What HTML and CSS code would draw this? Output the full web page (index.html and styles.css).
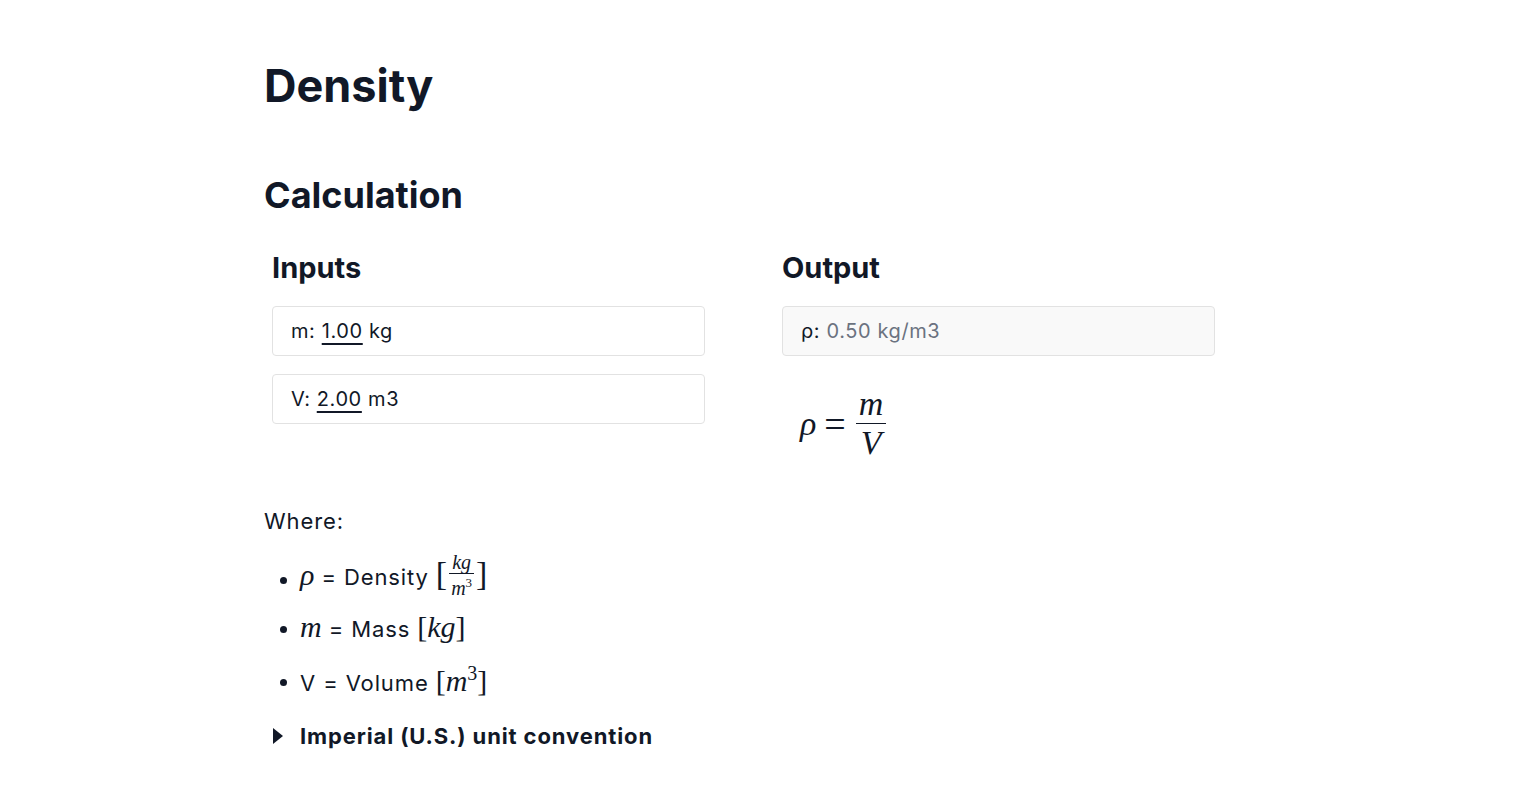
FILE: index.html
```html
<!DOCTYPE html>
<html lang="en">
<head>
    <meta charset="UTF-8">
    <meta name="viewport" content="width=device-width, initial-scale=1.0">
    <title>Density</title>
    <link rel="stylesheet" href="styles.css">
</head>
<body>
    <div class="page">
        <h1>Density</h1>

        <h2>Calculation</h2>

        <div class="calc">
            <div class="calc-col">
                <h3>Inputs</h3>
                <div class="field">m: <span class="num">1.00</span> kg</div>
                <div class="field">V: <span class="num">2.00</span> m3</div>
            </div>
            <div class="calc-col">
                <h3>Output</h3>
                <div class="field output">ρ: <span class="result">0.50 kg/m3</span></div>
                <div class="formula">
                    <span class="mi">ρ</span>
                    <span class="mo">=</span>
                    <span class="frac">
                        <span class="frac-top mi">m</span>
                        <span class="frac-bot mi">V</span>
                    </span>
                </div>
            </div>
        </div>

        <p class="where">Where:</p>
        <ul class="vars">
            <li><span><span class="mi">ρ</span> = Density <span class="unit"><span class="br">[</span><span class="frac small"><span class="frac-top mi">kg</span><span class="frac-bot mi">m<sup>3</sup></span></span><span class="br">]</span></span></span></li>
            <li><span><span class="mi">m</span> = Mass <span class="unit">[<span class="mi">kg</span>]</span></span></li>
            <li class="tall"><span>V = Volume <span class="unit">[<span class="mi">m</span><sup class="sup">3</sup>]</span></span></li>
        </ul>

        <details class="imperial">
            <summary>Imperial (U.S.) unit convention</summary>
        </details>
    </div>
</body>
</html>
```

FILE: styles.css
```css
body {
    margin: 0;
    font-family: Inter, "Noto Sans", sans-serif;
    color: #111827;
    background-color: #fff;
}

.page {
    width: 992px;
    margin: 0 auto;
    padding-top: 58px;
}

h1 {
    font-size: 45px;
    font-weight: 700;
    margin: 0 0 59px 0;
    line-height: 56px;
}

h2 {
    font-size: 36px;
    font-weight: 700;
    margin: 0 0 33px 0;
    line-height: 44px;
}

/* Inputs / Output columns */
.calc {
    display: grid;
    grid-template-columns: 510px 510px;
}

.calc-col {
    padding: 0 8px;
}

h3 {
    font-size: 29px;
    font-weight: 700;
    margin: 0 0 20px 0;
    line-height: 36px;
}

.field {
    width: 433px;
    box-sizing: border-box;
    height: 50px;
    line-height: 48px;
    border: 1px solid #e2e2e2;
    border-radius: 4px;
    padding: 0 18px;
    font-size: 20px;
    letter-spacing: 0.03em;
    margin-bottom: 18px;
}

.num {
    text-decoration: underline;
    text-underline-offset: 5px;
    text-decoration-thickness: 2px;
}

.output {
    background-color: #f9f9f9;
}

.result {
    color: #6b7280;
}

/* math */
.mi {
    font-family: "Liberation Serif", "DejaVu Serif", serif;
    font-style: italic;
    letter-spacing: 0;
}

.formula {
    display: flex;
    align-items: center;
    font-family: "Liberation Serif", serif;
    font-size: 34px;
    padding: 13px 0 0 18px;
}

.mo {
    font-size: 38px;
    padding: 0 10px 0 8px;
}

.frac {
    display: inline-flex;
    flex-direction: column;
    align-items: center;
    vertical-align: middle;
    line-height: 1;
}

.frac-top {
    padding: 0 3px 2px;
    border-bottom: 1.5px solid #111827;
}

.frac-bot {
    padding-top: 2px;
}

.where {
    font-size: 22px;
    line-height: 27px;
    letter-spacing: 0.04em;
    margin: 48px 0 18px 0;
}

/* variable list */
.vars {
    list-style: none;
    margin: 0;
    padding: 0;
    font-size: 22px;
    letter-spacing: 0.04em;
}

.vars li {
    display: flex;
    align-items: center;
    height: 49px;
}

.vars li.tall {
    height: 57px;
}

.vars li::before {
    content: "";
    flex: none;
    width: 7px;
    height: 7px;
    border-radius: 50%;
    background-color: #111827;
    margin: 5px 13px 0 16px;
}

.vars .mi {
    font-size: 30px;
}

.unit {
    font-family: "Liberation Serif", serif;
    font-size: 30px;
    letter-spacing: 0;
}

.br {
    font-size: 34px;
}

.frac.small {
    position: relative;
    top: -3px;
    margin: 0 2px;
}

.frac.small .mi {
    font-size: 20px;
}

.frac.small .frac-top {
    border-bottom-width: 1px;
    padding-bottom: 1px;
}

.frac.small sup {
    font-size: 13px;
    font-style: normal;
}

.sup {
    font-size: 20px;
}

.imperial {
    font-size: 22px;
    font-weight: 700;
    letter-spacing: 0.04em;
    margin-top: 13px;
    padding-left: 9px;
}

.imperial summary {
    cursor: pointer;
    list-style: none;
    display: flex;
    align-items: center;
    height: 30px;
    gap: 17px;
}

.imperial summary::-webkit-details-marker {
    display: none;
}

.imperial summary::before {
    content: "";
    width: 0;
    height: 0;
    border-top: 8px solid transparent;
    border-bottom: 8px solid transparent;
    border-left: 10px solid #111827;
}
```
